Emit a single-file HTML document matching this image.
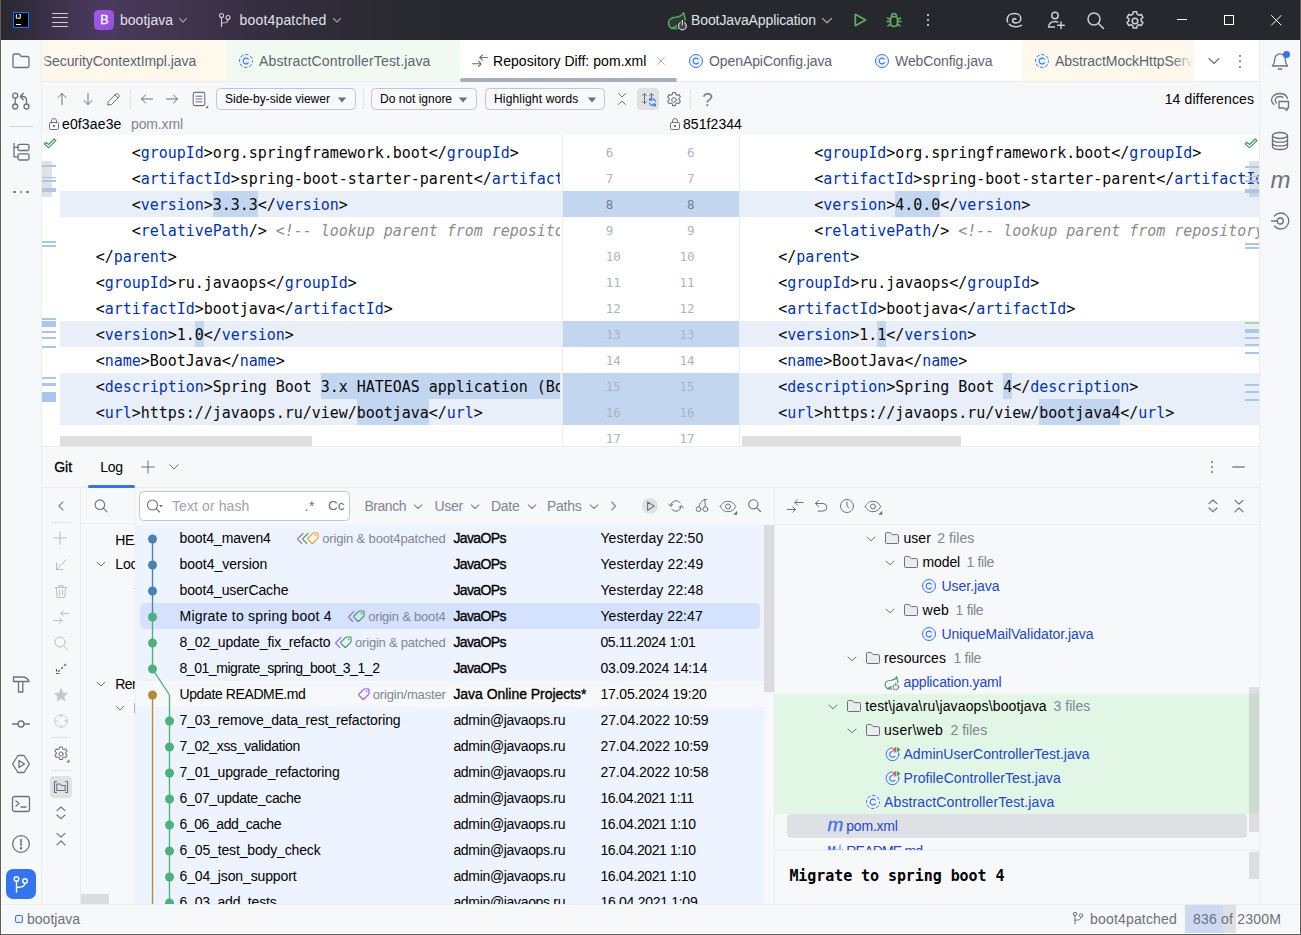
<!DOCTYPE html>
<html lang="en"><head><meta charset="utf-8"><title>bootjava – Repository Diff: pom.xml</title>
<style>

html,body{margin:0;padding:0}
body{width:1301px;height:935px;overflow:hidden;position:relative;background:#5e5e5c;font-family:"Liberation Sans",sans-serif}
div,span,svg{position:absolute}
.t{white-space:pre;line-height:20px;height:20px}
.m{font-family:"DejaVu Sans Mono","Liberation Mono",monospace}
svg{overflow:visible;fill:none;stroke:#6c707e;stroke-width:1;stroke-linecap:round;stroke-linejoin:round}
.clip{overflow:hidden}

</style></head>
<body>
<div style="left:1.1px;top:0px;width:1298.7px;height:933.9px;background:#fff;"></div>
<div style="left:2.1px;top:0px;width:1296.7px;height:932.7px;background:#f7f8fa;"></div>
<div style="left:1.1px;top:0px;width:1298.7px;height:40px;background:linear-gradient(90deg,#29272f 0,#372f45 40px,#4b3a5f 100px,#42354f 170px,#352e40 260px,#2c2a33 360px,#27282e 450px);"></div>
<div style="left:41px;top:40px;width:1px;height:864px;background:#ebecf0;"></div>
<div style="left:1259px;top:40px;width:1px;height:864px;background:#ebecf0;"></div>
<div style="left:42px;top:40px;width:1217px;height:41px;background:#fff;"></div>
<div style="left:42px;top:81px;width:1217px;height:1px;background:#ebecf0;"></div>
<div style="left:42px;top:135px;width:1217px;height:311px;background:#fff;"></div>
<div style="left:2.1px;top:904px;width:1296.7px;height:1px;background:#ebecf0;"></div>
<div style="left:13px;top:12px;width:16px;height:16px;background:#000;box-sizing:border-box;border:1px solid #087cfa;"></div>
<span class="t" style="top:7.300000000000001px;left:15.6px;font-size:6.5px;color:#fff;font-weight:700;letter-spacing:0.189px;">IJ</span>
<div style="left:16px;top:24px;width:5px;height:1px;background:#fff;"></div>
<div style="left:52px;top:12.7px;width:16px;height:1.3px;background:#ced0d6;border-radius:1px;"></div>
<div style="left:52px;top:17.1px;width:16px;height:1.3px;background:#ced0d6;border-radius:1px;"></div>
<div style="left:52px;top:21.5px;width:16px;height:1.3px;background:#ced0d6;border-radius:1px;"></div>
<div style="left:52px;top:25.900000000000002px;width:16px;height:1.3px;background:#ced0d6;border-radius:1px;"></div>
<div style="left:94px;top:10px;width:20px;height:20px;background:linear-gradient(135deg,#a159e4,#9450dc);border-radius:4.5px;"></div>
<span class="t" style="top:10.2px;left:100.3px;font-size:12.5px;color:#fff;-webkit-text-stroke:.3px #fff;">B</span>
<span class="t" style="top:10.100000000000001px;left:120px;font-size:14px;color:#dfe1e5;letter-spacing:0.008px;">bootjava</span>
<svg style="left:178px;top:15px;" width="10" height="10" viewBox="0 0 10 10"><path d="M1.5 3.5 5 7l3.5-3.500" stroke="#9a9ca5" stroke-width="1.1"/></svg>
<svg style="left:218px;top:12px;" width="14" height="16" viewBox="0 0 14 16"><g stroke="#ced0d6" stroke-width="1.1"><circle cx="3.5" cy="3.5" r="2"/><circle cx="10" cy="5.5" r="2"/><path d="M3.500 5.500V14.500M10 7.500c0 3-2 3.500-6.500 3.500"/></g></svg>
<span class="t" style="top:10.100000000000001px;left:239.5px;font-size:14px;color:#dfe1e5;letter-spacing:0.178px;">boot4patched</span>
<svg style="left:332px;top:15px;" width="10" height="10" viewBox="0 0 10 10"><path d="M1.500 3.500 5 7l3.500-3.500" stroke="#9a9ca5" stroke-width="1.1"/></svg>
<svg style="left:667px;top:9px;" width="22" height="22" viewBox="0 0 22 22"><path d="M16.600 3.600C15.500 6.500 13 7.800 9 8.200 4.500 8.500 1.500 10.500 1.500 14c0 2.500 1.500 4.300 3.300 5.500H12V16l6.500-5z" fill="#2b3d2e" stroke="none"/><g stroke="#57a55f" stroke-width="1.500" stroke-linejoin="round"><path d="M18.300 11C17.800 8 17.200 5.500 16.600 3.600 15.500 6.500 13 7.800 9 8.200 4.500 8.500 1.500 10.500 1.500 14c0 2.500 1.500 4.300 3.300 5.500h6"/><path d="M4.800 19.200c2.200-.6 3.700-1.400 5-2.700"/></g><circle cx="15.400" cy="16.900" r="5.300" fill="#27282e" stroke="none"/><circle cx="15.400" cy="16.900" r="3.900" fill="#43454a" stroke="#ced0d6" stroke-width="1.300"/><path d="M15.400 10.800v5.200" stroke="#27282e" stroke-width="3.400" stroke-linecap="butt"/><path d="M15.400 11.300v4.500" stroke="#ced0d6" stroke-width="1.300"/></svg>
<span class="t" style="top:10.100000000000001px;left:691px;font-size:14px;color:#dfe1e5;letter-spacing:-0.099px;">BootJavaApplication</span>
<svg style="left:821px;top:15px;" width="12" height="10" viewBox="0 0 12 10"><path d="M1.500 3.500 6 7.800l4.500-4.300" stroke="#a3a5ad" stroke-width="1.200"/></svg>
<svg style="left:853px;top:12px;" width="16" height="16" viewBox="0 0 16 16"><path d="M2.300 2.300v11.400l10.300-5.700z" stroke="#5fad65" stroke-width="1.700"/></svg>
<svg style="left:885px;top:11px;" width="18" height="18" viewBox="0 0 18 18"><g stroke="#5fad65" stroke-width="1.600"><path d="M5.500 8.500c0-2 1.500-3 3.500-3s3.500 1 3.500 3v3.500c0 2-1.500 3.500-3.500 3.500s-3.500-1.500-3.500-3.500z"/><path d="M6.500 5.500c0-1.700 1-3 2.500-3s2.500 1.300 2.500 3"/><path d="M5.500 8.500 2.500 7M12.500 8.500l3-1.500M5.500 10.500h-3.500M12.500 10.500h3.500M5.700 13l-2.700 1.800M12.300 13l2.700 1.800"/></g></svg>
<div style="left:926.7px;top:13.700000000000001px;width:2.2px;height:2.2px;background:#dfe1e5;border-radius:50%;"></div>
<div style="left:926.7px;top:19.0px;width:2.2px;height:2.2px;background:#dfe1e5;border-radius:50%;"></div>
<div style="left:926.7px;top:24.299999999999997px;width:2.2px;height:2.2px;background:#dfe1e5;border-radius:50%;"></div>
<svg style="left:1005px;top:9px;" width="20" height="20" viewBox="0 0 20 20"><g stroke="#ced0d6" stroke-width="1.550"><path d="M10.800 10.300c-.900-1.200-3.200-.700-3.200 1.100 0 1.700 1.600 2.500 3.300 2.500 2.700 0 4.900-1.800 4.900-4.400 0-3-2.800-5-6.300-5-4.200 0-7.300 2.500-7.300 6.200 0 .800.100 1.500.400 2.200"/><path d="M4.300 15.300c1.500 1.700 3.800 2.500 6.500 2.500 2.300 0 4.200-.500 5.700-1.400"/></g></svg>
<svg style="left:1046px;top:10px;" width="20" height="20" viewBox="0 0 20 20"><g stroke="#ced0d6" stroke-width="1.450"><circle cx="9" cy="5.500" r="3.200"/><path d="M2.500 17c.5-3.500 3-5.500 6.500-5.500 1 0 2 .2 2.800.6M2.500 17h6M15 12v6.500M11.700 15.200h6.600"/></g></svg>
<svg style="left:1086px;top:11px;" width="19" height="19" viewBox="0 0 19 19"><g stroke="#ced0d6" stroke-width="1.500"><circle cx="8" cy="8" r="6"/><path d="M12.500 12.500 17.500 17.500"/></g></svg>
<svg style="left:1125px;top:10px;" width="20" height="20" viewBox="0 0 20 20"><g stroke="#ced0d6" stroke-width="1.400" transform="translate(-.7 0) scale(1.070)"><path d="M8.400 1.700h3.200l.5 2.300 1.500.85 2.200-.75 1.600 2.800-1.700 1.550v1.700l1.700 1.550-1.600 2.800-2.200-.75-1.500.85-.5 2.300h-3.200l-.5-2.300-1.500-.85-2.200.75-1.600-2.800 1.700-1.550v-1.700l-1.700-1.550 1.600-2.800 2.200.75 1.500-.85z" stroke-linejoin="round"/><circle cx="10" cy="10.300" r="2.600"/></g></svg>
<div style="left:1177px;top:19px;width:10px;height:1px;background:#fff;"></div>
<div style="left:1224px;top:15px;width:10px;height:10px;box-sizing:border-box;border:1px solid #fff;"></div>
<svg style="left:1270.7px;top:14.5px;" width="11" height="11" viewBox="0 0 11 11"><path d="M.500.500l9.600 9.600M10.100.500l-9.600 9.600" stroke="#fff" stroke-width="1"/></svg>
<div style="left:42px;top:40px;width:184px;height:41px;background:#fef8ed;"></div>
<div class="clip" style="left:42px;top:40px;width:184px;height:40px">
<span class="t" style="top:11px;left:0.7px;font-size:14px;color:#60636f;letter-spacing:-0.056px;">SecurityContextImpl.java</span>
</div>
<div style="left:42px;top:40px;width:6px;height:40px;background:linear-gradient(90deg,#fef8ed,rgba(254,248,237,0));"></div>
<div style="left:226px;top:40px;width:234px;height:41px;background:#f0faf1;"></div>
<svg style="left:238px;top:53px;" width="16" height="16" viewBox="0 0 16 16"><circle cx="8" cy="8" r="6.500" stroke="#3574f0" fill="#edf3ff" stroke-dasharray="3.400 1.705" stroke-dashoffset="1.700" stroke-linecap="butt"/><path d="M10.300 9.800a2.900 2.900 0 1 1 0-3.600" stroke="#3574f0" stroke-width="1.1"/></svg>
<span class="t" style="top:51px;left:259px;font-size:14px;color:#60636f;letter-spacing:0.156px;">AbstractControllerTest.java</span>
<svg style="left:471px;top:52px;" width="18" height="18" viewBox="0 0 18 18"><g stroke="#6c707e" stroke-width="1.1"><path d="M16.500 5.500h-7.500M11.500 2.800 8.800 5.500l2.700 2.700"/><path d="M1.500 11.800h8.500M7.500 9.100l2.700 2.700-2.700 2.700"/></g></svg>
<span class="t" style="top:51px;left:493px;font-size:14px;color:#000;letter-spacing:0.053px;">Repository Diff: pom.xml</span>
<svg style="left:657px;top:57px;" width="8" height="8" viewBox="0 0 8 8"><path d="M.5.500l7 7M7.500.500l-7 7" stroke="#a8adbd" stroke-width="1"/></svg>
<div style="left:460px;top:78px;width:217px;height:3.6px;background:#a8adbd;border-radius:2px;"></div>
<svg style="left:688px;top:53px;" width="16" height="16" viewBox="0 0 16 16"><circle cx="8" cy="8" r="6.500" stroke="#3574f0" fill="#edf3ff" stroke-linecap="butt"/><path d="M10.300 9.800a2.900 2.900 0 1 1 0-3.600" stroke="#3574f0" stroke-width="1.1"/></svg>
<span class="t" style="top:51px;left:709px;font-size:14px;color:#60636f;letter-spacing:-0.085px;">OpenApiConfig.java</span>
<svg style="left:874px;top:53px;" width="16" height="16" viewBox="0 0 16 16"><circle cx="8" cy="8" r="6.500" stroke="#3574f0" fill="#edf3ff" stroke-linecap="butt"/><path d="M10.300 9.800a2.900 2.900 0 1 1 0-3.600" stroke="#3574f0" stroke-width="1.1"/></svg>
<span class="t" style="top:51px;left:895px;font-size:14px;color:#60636f;letter-spacing:-0.077px;">WebConfig.java</span>
<div style="left:1022px;top:40px;width:172px;height:41px;background:#fef8ed;"></div>
<svg style="left:1034px;top:53px;" width="16" height="16" viewBox="0 0 16 16"><circle cx="8" cy="8" r="6.500" stroke="#3574f0" fill="#edf3ff" stroke-dasharray="3.400 1.705" stroke-dashoffset="1.700" stroke-linecap="butt"/><path d="M10.300 9.800a2.900 2.900 0 1 1 0-3.600" stroke="#3574f0" stroke-width="1.1"/></svg>
<div class="clip" style="left:1055px;top:40px;width:139px;height:40px">
<span class="t" style="top:11px;left:0px;font-size:14px;color:#60636f;letter-spacing:-0.065px;">AbstractMockHttpServletRequest.java</span>
</div>
<div style="left:1172px;top:40px;width:22px;height:40px;background:linear-gradient(90deg,rgba(254,248,237,0),#fef8ed);"></div>
<svg style="left:1208px;top:56px;" width="12" height="10" viewBox="0 0 12 10"><path d="M1 2.500 6 7.500l5-5" stroke="#6c707e" stroke-width="1.1"/></svg>
<div style="left:1239px;top:54.5px;width:2px;height:2px;background:#6c707e;border-radius:50%;"></div>
<div style="left:1239px;top:60px;width:2px;height:2px;background:#6c707e;border-radius:50%;"></div>
<div style="left:1239px;top:65.5px;width:2px;height:2px;background:#6c707e;border-radius:50%;"></div>
<svg style="left:54px;top:91px;" width="16" height="16" viewBox="0 0 16 16"><path d="M8 13.700V2.500M3.900 6.600 8 2.500 12.100 6.600"/></svg>
<svg style="left:80px;top:91px;" width="16" height="16" viewBox="0 0 16 16"><path d="M8 2.300v11.200M3.900 9.400 8 13.500 12.100 9.400"/></svg>
<svg style="left:106px;top:91px;" width="16" height="16" viewBox="0 0 16 16"><path d="M2.500 10.500 9.800 3.200a1.700 1.700 0 0 1 2.400 0l.6.600a1.700 1.700 0 0 1 0 2.400L5.500 13.500l-3.500.500zM9 4l3 3"/></svg>
<div style="left:130px;top:89px;width:1px;height:20px;background:#dfe1e5;"></div>
<svg style="left:139px;top:91px;" width="16" height="16" viewBox="0 0 16 16"><path d="M13.700 8H2.500M6.600 3.900 2.500 8 6.600 12.100"/></svg>
<svg style="left:164px;top:91px;" width="16" height="16" viewBox="0 0 16 16"><path d="M2.300 8h11.200M9.400 3.900 13.500 8 9.400 12.100"/></svg>
<svg style="left:191px;top:91px;" width="18" height="18" viewBox="0 0 18 18"><rect x="2.200" y="1.400" width="11.600" height="13.200" rx="1.800" stroke-width="1.100"/><path d="M5 5.200h6M5 8h6M5 10.800h6"/><path d="M17.200 14.300v3h-3z" fill="#6c707e" stroke="none"/></svg>
<div style="left:216px;top:88px;width:139.5px;height:22px;box-sizing:border-box;border:1.200px solid #c0c3d0;border-radius:4.500px;"></div>
<span class="t" style="top:88.7px;left:225px;font-size:12px;color:#000;letter-spacing:0.015px;">Side-by-side viewer</span>
<svg style="left:337.2px;top:96.5px;" width="10" height="6" viewBox="0 0 10 6"><path d="M.800.500h8.400L5 5.500z" fill="#6e6e6e" stroke="none"/></svg>
<div style="left:363px;top:89px;width:1px;height:20px;background:#dfe1e5;"></div>
<div style="left:371px;top:88px;width:105.5px;height:22px;box-sizing:border-box;border:1.200px solid #c0c3d0;border-radius:4.500px;"></div>
<span class="t" style="top:88.7px;left:380px;font-size:12px;color:#000;">Do not ignore</span>
<svg style="left:458.2px;top:96.5px;" width="10" height="6" viewBox="0 0 10 6"><path d="M.800.500h8.400L5 5.500z" fill="#6e6e6e" stroke="none"/></svg>
<div style="left:485px;top:88px;width:120px;height:22px;box-sizing:border-box;border:1.200px solid #c0c3d0;border-radius:4.500px;"></div>
<span class="t" style="top:88.7px;left:494px;font-size:12px;color:#000;letter-spacing:0.164px;">Highlight words</span>
<svg style="left:586.7px;top:96.5px;" width="10" height="6" viewBox="0 0 10 6"><path d="M.800.500h8.400L5 5.500z" fill="#6e6e6e" stroke="none"/></svg>
<svg style="left:614px;top:91px;" width="16" height="16" viewBox="0 0 16 16"><path d="M4.500 2.500 8 6l3.500-3.500M4.500 13.500 8 10l3.500 3.500"/></svg>
<div style="left:637px;top:88px;width:22px;height:22px;background:#dfe1e5;border-radius:4px;"></div>
<svg style="left:640.7px;top:91px;" width="16" height="16" viewBox="0 0 16 16"><path d="M3.500 2.500v10M1.500 4.500l2-2 2 2M1.500 10.500l2 2 2-2M10.500 2.500v4.500M8.500 4.500l2-2 2 2"/><g stroke="#3574f0" stroke-width="1.2"><path d="M14.300 10.300a3 3 0 0 0-5.300-1.300M8.700 12a3 3 0 0 0 5.300 1.300"/><path d="M8.800 7.200v2h2M14.200 15.200v-2h-2"/></g></svg>
<svg style="left:665px;top:90.9px;" width="18" height="18" viewBox="0 0 18 18"><path d="M8.400 1.700h3.200l.5 2.300 1.500.85 2.200-.75 1.600 2.800-1.700 1.550v1.700l1.700 1.550-1.600 2.800-2.200-.75-1.500.85-.5 2.300h-3.200l-.5-2.300-1.500-.85-2.200.75-1.600-2.800 1.700-1.550v-1.700l-1.700-1.550 1.600-2.800 2.200.75 1.500-.85z" transform="translate(.4 .100) scale(.86)" stroke-width="1.250"/><circle cx="9" cy="9" r="2.300"/></svg>
<div style="left:690px;top:89px;width:1px;height:20px;background:#dfe1e5;"></div>
<span class="t" style="top:90.1px;left:702.3px;font-size:19px;color:#7a7e8c;">?</span>
<span class="t" style="top:89px;left:1164.63px;font-size:14px;color:#000;letter-spacing:0.128px;">14 differences</span>
<svg style="left:49px;top:118px;" width="10" height="12" viewBox="0 0 10 12"><rect x=".500" y="4.500" width="9" height="7" rx="1.200"/><path d="M2.500 4.500v-1.500a2.500 2.500 0 0 1 5 0v1.500"/><rect x="4" y="7" width="2" height="2" fill="#6c707e" stroke="none"/></svg>
<span class="t" style="top:114px;left:62px;font-size:14px;color:#000;letter-spacing:0.137px;">e0f3ae3e</span>
<span class="t" style="top:114px;left:131px;font-size:14px;color:#818594;letter-spacing:-0.129px;">pom.xml</span>
<svg style="left:670px;top:118px;" width="10" height="12" viewBox="0 0 10 12"><rect x=".500" y="4.500" width="9" height="7" rx="1.200"/><path d="M2.500 4.500v-1.500a2.500 2.500 0 0 1 5 0v1.500"/><rect x="4" y="7" width="2" height="2" fill="#6c707e" stroke="none"/></svg>
<span class="t" style="top:114px;left:683px;font-size:14px;color:#000;letter-spacing:0.074px;">851f2344</span>
<div class="clip" style="left:60px;top:135px;width:502px;height:302px">
<div style="left:0px;top:56px;width:502px;height:26px;background:#e9eff9;"></div>
<div style="left:0px;top:186px;width:502px;height:26px;background:#e9eff9;"></div>
<div style="left:0px;top:238px;width:502px;height:26px;background:#e9eff9;"></div>
<div style="left:0px;top:264px;width:502px;height:26px;background:#e9eff9;"></div>
<span class="t m" style="top:7.5px;left:71.8px;font-size:15px;color:#080808;">&lt;</span>
<span class="t m" style="top:7.5px;left:80.8px;font-size:15px;color:#0033b3;letter-spacing:-0.031px;">groupId</span>
<span class="t m" style="top:7.5px;left:143.8px;font-size:15px;color:#080808;letter-spacing:-0.031px;">&gt;org.springframework.boot&lt;/</span>
<span class="t m" style="top:7.5px;left:386.8px;font-size:15px;color:#0033b3;letter-spacing:-0.031px;">groupId</span>
<span class="t m" style="top:7.5px;left:449.8px;font-size:15px;color:#080808;">&gt;</span>
<span class="t m" style="top:33.5px;left:71.8px;font-size:15px;color:#080808;">&lt;</span>
<span class="t m" style="top:33.5px;left:80.8px;font-size:15px;color:#0033b3;letter-spacing:-0.031px;">artifactId</span>
<span class="t m" style="top:33.5px;left:170.8px;font-size:15px;color:#080808;letter-spacing:-0.031px;">&gt;spring-boot-starter-parent&lt;/</span>
<span class="t m" style="top:33.5px;left:431.8px;font-size:15px;color:#0033b3;letter-spacing:-0.031px;">artifactId</span>
<span class="t m" style="top:33.5px;left:521.8px;font-size:15px;color:#080808;">&gt;</span>
<span class="t m" style="top:59.5px;left:71.8px;font-size:15px;color:#080808;">&lt;</span>
<span class="t m" style="top:59.5px;left:80.8px;font-size:15px;color:#0033b3;letter-spacing:-0.031px;">version</span>
<span class="t m" style="top:59.5px;left:143.8px;font-size:15px;color:#080808;">&gt;</span>
<div style="left:152.8px;top:56px;width:45.0px;height:26px;background:#c2d6f0;"></div>
<span class="t m" style="top:59.5px;left:152.8px;font-size:15px;color:#080808;letter-spacing:-0.031px;">3.3.3</span>
<span class="t m" style="top:59.5px;left:197.8px;font-size:15px;color:#080808;letter-spacing:-0.031px;">&lt;/</span>
<span class="t m" style="top:59.5px;left:215.8px;font-size:15px;color:#0033b3;letter-spacing:-0.031px;">version</span>
<span class="t m" style="top:59.5px;left:278.8px;font-size:15px;color:#080808;">&gt;</span>
<span class="t m" style="top:85.5px;left:71.8px;font-size:15px;color:#080808;">&lt;</span>
<span class="t m" style="top:85.5px;left:80.8px;font-size:15px;color:#0033b3;letter-spacing:-0.031px;">relativePath</span>
<span class="t m" style="top:85.5px;left:188.8px;font-size:15px;color:#080808;letter-spacing:-0.031px;">/&gt; </span>
<span class="t m" style="top:85.5px;left:215.8px;font-size:15px;color:#8c8c8c;font-style:italic;letter-spacing:-0.031px;">&lt;!-- lookup parent from repository --&gt;</span>
<span class="t m" style="top:111.5px;left:35.8px;font-size:15px;color:#080808;letter-spacing:-0.031px;">&lt;/</span>
<span class="t m" style="top:111.5px;left:53.8px;font-size:15px;color:#0033b3;letter-spacing:-0.031px;">parent</span>
<span class="t m" style="top:111.5px;left:107.8px;font-size:15px;color:#080808;">&gt;</span>
<span class="t m" style="top:137.5px;left:35.8px;font-size:15px;color:#080808;">&lt;</span>
<span class="t m" style="top:137.5px;left:44.8px;font-size:15px;color:#0033b3;letter-spacing:-0.031px;">groupId</span>
<span class="t m" style="top:137.5px;left:107.8px;font-size:15px;color:#080808;letter-spacing:-0.031px;">&gt;ru.javaops&lt;/</span>
<span class="t m" style="top:137.5px;left:224.8px;font-size:15px;color:#0033b3;letter-spacing:-0.031px;">groupId</span>
<span class="t m" style="top:137.5px;left:287.8px;font-size:15px;color:#080808;">&gt;</span>
<span class="t m" style="top:163.5px;left:35.8px;font-size:15px;color:#080808;">&lt;</span>
<span class="t m" style="top:163.5px;left:44.8px;font-size:15px;color:#0033b3;letter-spacing:-0.031px;">artifactId</span>
<span class="t m" style="top:163.5px;left:134.8px;font-size:15px;color:#080808;letter-spacing:-0.031px;">&gt;bootjava&lt;/</span>
<span class="t m" style="top:163.5px;left:233.8px;font-size:15px;color:#0033b3;letter-spacing:-0.031px;">artifactId</span>
<span class="t m" style="top:163.5px;left:323.8px;font-size:15px;color:#080808;">&gt;</span>
<span class="t m" style="top:189.5px;left:35.8px;font-size:15px;color:#080808;">&lt;</span>
<span class="t m" style="top:189.5px;left:44.8px;font-size:15px;color:#0033b3;letter-spacing:-0.031px;">version</span>
<span class="t m" style="top:189.5px;left:107.8px;font-size:15px;color:#080808;letter-spacing:-0.031px;">&gt;1.</span>
<div style="left:134.8px;top:186px;width:9.0px;height:26px;background:#c2d6f0;"></div>
<span class="t m" style="top:189.5px;left:134.8px;font-size:15px;color:#080808;">0</span>
<span class="t m" style="top:189.5px;left:143.8px;font-size:15px;color:#080808;letter-spacing:-0.031px;">&lt;/</span>
<span class="t m" style="top:189.5px;left:161.8px;font-size:15px;color:#0033b3;letter-spacing:-0.031px;">version</span>
<span class="t m" style="top:189.5px;left:224.8px;font-size:15px;color:#080808;">&gt;</span>
<span class="t m" style="top:215.5px;left:35.8px;font-size:15px;color:#080808;">&lt;</span>
<span class="t m" style="top:215.5px;left:44.8px;font-size:15px;color:#0033b3;letter-spacing:-0.031px;">name</span>
<span class="t m" style="top:215.5px;left:80.8px;font-size:15px;color:#080808;letter-spacing:-0.031px;">&gt;BootJava&lt;/</span>
<span class="t m" style="top:215.5px;left:179.8px;font-size:15px;color:#0033b3;letter-spacing:-0.031px;">name</span>
<span class="t m" style="top:215.5px;left:215.8px;font-size:15px;color:#080808;">&gt;</span>
<span class="t m" style="top:241.5px;left:35.8px;font-size:15px;color:#080808;">&lt;</span>
<span class="t m" style="top:241.5px;left:44.8px;font-size:15px;color:#0033b3;letter-spacing:-0.031px;">description</span>
<span class="t m" style="top:241.5px;left:143.8px;font-size:15px;color:#080808;letter-spacing:-0.031px;">&gt;Spring Boot </span>
<div style="left:260.8px;top:238px;width:324.0px;height:26px;background:#c2d6f0;"></div>
<span class="t m" style="top:241.5px;left:260.8px;font-size:15px;color:#080808;letter-spacing:-0.031px;">3.x HATEOAS application (BootJava)&lt;/</span>
<div style="left:584.8px;top:238px;width:45.0px;height:26px;background:#c2d6f0;"></div>
<span class="t m" style="top:241.5px;left:584.8px;font-size:15px;color:#0033b3;letter-spacing:-0.031px;">descr</span>
<span class="t m" style="top:241.5px;left:629.8px;font-size:15px;color:#0033b3;letter-spacing:-0.031px;">iption</span>
<span class="t m" style="top:241.5px;left:683.8px;font-size:15px;color:#080808;">&gt;</span>
<span class="t m" style="top:267.5px;left:35.8px;font-size:15px;color:#080808;">&lt;</span>
<span class="t m" style="top:267.5px;left:44.8px;font-size:15px;color:#0033b3;letter-spacing:-0.031px;">url</span>
<span class="t m" style="top:267.5px;left:71.8px;font-size:15px;color:#080808;letter-spacing:-0.031px;">&gt;https:</span>
<span class="t m" style="top:267.5px;left:134.8px;font-size:15px;color:#080808;letter-spacing:-0.031px;">//javaops.ru/view/</span>
<div style="left:296.8px;top:264px;width:72.0px;height:26px;background:#c2d6f0;"></div>
<span class="t m" style="top:267.5px;left:296.8px;font-size:15px;color:#080808;letter-spacing:-0.031px;">bootjava</span>
<span class="t m" style="top:267.5px;left:368.8px;font-size:15px;color:#080808;letter-spacing:-0.031px;">&lt;/</span>
<span class="t m" style="top:267.5px;left:386.8px;font-size:15px;color:#0033b3;letter-spacing:-0.031px;">url</span>
<span class="t m" style="top:267.5px;left:413.8px;font-size:15px;color:#080808;">&gt;</span>
</div>
<div style="left:560px;top:135px;width:2px;height:302px;background:#fff;"></div>
<div style="left:560px;top:191px;width:2px;height:26px;background:#e9eff9;"></div>
<div style="left:560px;top:321px;width:2px;height:26px;background:#e9eff9;"></div>
<div style="left:560px;top:373px;width:2px;height:26px;background:#e9eff9;"></div>
<div style="left:560px;top:399px;width:2px;height:26px;background:#e9eff9;"></div>
<div class="clip" style="left:740px;top:135px;width:519px;height:302px">
<div style="left:0px;top:56px;width:519px;height:26px;background:#e9eff9;"></div>
<div style="left:0px;top:186px;width:519px;height:26px;background:#e9eff9;"></div>
<div style="left:0px;top:238px;width:519px;height:26px;background:#e9eff9;"></div>
<div style="left:0px;top:264px;width:519px;height:26px;background:#e9eff9;"></div>
<span class="t m" style="top:7.5px;left:74.2px;font-size:15px;color:#080808;">&lt;</span>
<span class="t m" style="top:7.5px;left:83.2px;font-size:15px;color:#0033b3;letter-spacing:-0.031px;">groupId</span>
<span class="t m" style="top:7.5px;left:146.2px;font-size:15px;color:#080808;letter-spacing:-0.031px;">&gt;org.springframework.boot&lt;/</span>
<span class="t m" style="top:7.5px;left:389.2px;font-size:15px;color:#0033b3;letter-spacing:-0.031px;">groupId</span>
<span class="t m" style="top:7.5px;left:452.2px;font-size:15px;color:#080808;">&gt;</span>
<span class="t m" style="top:33.5px;left:74.2px;font-size:15px;color:#080808;">&lt;</span>
<span class="t m" style="top:33.5px;left:83.2px;font-size:15px;color:#0033b3;letter-spacing:-0.031px;">artifactId</span>
<span class="t m" style="top:33.5px;left:173.2px;font-size:15px;color:#080808;letter-spacing:-0.031px;">&gt;spring-boot-starter-parent&lt;/</span>
<span class="t m" style="top:33.5px;left:434.2px;font-size:15px;color:#0033b3;letter-spacing:-0.031px;">artifactId</span>
<span class="t m" style="top:33.5px;left:524.2px;font-size:15px;color:#080808;">&gt;</span>
<span class="t m" style="top:59.5px;left:74.2px;font-size:15px;color:#080808;">&lt;</span>
<span class="t m" style="top:59.5px;left:83.2px;font-size:15px;color:#0033b3;letter-spacing:-0.031px;">version</span>
<span class="t m" style="top:59.5px;left:146.2px;font-size:15px;color:#080808;">&gt;</span>
<div style="left:155.2px;top:56px;width:45.0px;height:26px;background:#c2d6f0;"></div>
<span class="t m" style="top:59.5px;left:155.2px;font-size:15px;color:#080808;letter-spacing:-0.031px;">4.0.0</span>
<span class="t m" style="top:59.5px;left:200.2px;font-size:15px;color:#080808;letter-spacing:-0.031px;">&lt;/</span>
<span class="t m" style="top:59.5px;left:218.2px;font-size:15px;color:#0033b3;letter-spacing:-0.031px;">version</span>
<span class="t m" style="top:59.5px;left:281.2px;font-size:15px;color:#080808;">&gt;</span>
<span class="t m" style="top:85.5px;left:74.2px;font-size:15px;color:#080808;">&lt;</span>
<span class="t m" style="top:85.5px;left:83.2px;font-size:15px;color:#0033b3;letter-spacing:-0.031px;">relativePath</span>
<span class="t m" style="top:85.5px;left:191.2px;font-size:15px;color:#080808;letter-spacing:-0.031px;">/&gt; </span>
<span class="t m" style="top:85.5px;left:218.2px;font-size:15px;color:#8c8c8c;font-style:italic;letter-spacing:-0.031px;">&lt;!-- lookup parent from repository --&gt;</span>
<span class="t m" style="top:111.5px;left:38.2px;font-size:15px;color:#080808;letter-spacing:-0.031px;">&lt;/</span>
<span class="t m" style="top:111.5px;left:56.2px;font-size:15px;color:#0033b3;letter-spacing:-0.031px;">parent</span>
<span class="t m" style="top:111.5px;left:110.2px;font-size:15px;color:#080808;">&gt;</span>
<span class="t m" style="top:137.5px;left:38.2px;font-size:15px;color:#080808;">&lt;</span>
<span class="t m" style="top:137.5px;left:47.2px;font-size:15px;color:#0033b3;letter-spacing:-0.031px;">groupId</span>
<span class="t m" style="top:137.5px;left:110.2px;font-size:15px;color:#080808;letter-spacing:-0.031px;">&gt;ru.javaops&lt;/</span>
<span class="t m" style="top:137.5px;left:227.2px;font-size:15px;color:#0033b3;letter-spacing:-0.031px;">groupId</span>
<span class="t m" style="top:137.5px;left:290.2px;font-size:15px;color:#080808;">&gt;</span>
<span class="t m" style="top:163.5px;left:38.2px;font-size:15px;color:#080808;">&lt;</span>
<span class="t m" style="top:163.5px;left:47.2px;font-size:15px;color:#0033b3;letter-spacing:-0.031px;">artifactId</span>
<span class="t m" style="top:163.5px;left:137.2px;font-size:15px;color:#080808;letter-spacing:-0.031px;">&gt;bootjava&lt;/</span>
<span class="t m" style="top:163.5px;left:236.2px;font-size:15px;color:#0033b3;letter-spacing:-0.031px;">artifactId</span>
<span class="t m" style="top:163.5px;left:326.2px;font-size:15px;color:#080808;">&gt;</span>
<span class="t m" style="top:189.5px;left:38.2px;font-size:15px;color:#080808;">&lt;</span>
<span class="t m" style="top:189.5px;left:47.2px;font-size:15px;color:#0033b3;letter-spacing:-0.031px;">version</span>
<span class="t m" style="top:189.5px;left:110.2px;font-size:15px;color:#080808;letter-spacing:-0.031px;">&gt;1.</span>
<div style="left:137.2px;top:186px;width:9.0px;height:26px;background:#c2d6f0;"></div>
<span class="t m" style="top:189.5px;left:137.2px;font-size:15px;color:#080808;">1</span>
<span class="t m" style="top:189.5px;left:146.2px;font-size:15px;color:#080808;letter-spacing:-0.031px;">&lt;/</span>
<span class="t m" style="top:189.5px;left:164.2px;font-size:15px;color:#0033b3;letter-spacing:-0.031px;">version</span>
<span class="t m" style="top:189.5px;left:227.2px;font-size:15px;color:#080808;">&gt;</span>
<span class="t m" style="top:215.5px;left:38.2px;font-size:15px;color:#080808;">&lt;</span>
<span class="t m" style="top:215.5px;left:47.2px;font-size:15px;color:#0033b3;letter-spacing:-0.031px;">name</span>
<span class="t m" style="top:215.5px;left:83.2px;font-size:15px;color:#080808;letter-spacing:-0.031px;">&gt;BootJava&lt;/</span>
<span class="t m" style="top:215.5px;left:182.2px;font-size:15px;color:#0033b3;letter-spacing:-0.031px;">name</span>
<span class="t m" style="top:215.5px;left:218.2px;font-size:15px;color:#080808;">&gt;</span>
<span class="t m" style="top:241.5px;left:38.2px;font-size:15px;color:#080808;">&lt;</span>
<span class="t m" style="top:241.5px;left:47.2px;font-size:15px;color:#0033b3;letter-spacing:-0.031px;">description</span>
<span class="t m" style="top:241.5px;left:146.2px;font-size:15px;color:#080808;letter-spacing:-0.031px;">&gt;Spring Boot </span>
<div style="left:263.2px;top:238px;width:9.0px;height:26px;background:#c2d6f0;"></div>
<span class="t m" style="top:241.5px;left:263.2px;font-size:15px;color:#080808;">4</span>
<span class="t m" style="top:241.5px;left:272.2px;font-size:15px;color:#080808;letter-spacing:-0.031px;">&lt;/</span>
<span class="t m" style="top:241.5px;left:290.2px;font-size:15px;color:#0033b3;letter-spacing:-0.031px;">description</span>
<span class="t m" style="top:241.5px;left:389.2px;font-size:15px;color:#080808;">&gt;</span>
<span class="t m" style="top:267.5px;left:38.2px;font-size:15px;color:#080808;">&lt;</span>
<span class="t m" style="top:267.5px;left:47.2px;font-size:15px;color:#0033b3;letter-spacing:-0.031px;">url</span>
<span class="t m" style="top:267.5px;left:74.2px;font-size:15px;color:#080808;letter-spacing:-0.031px;">&gt;https:</span>
<span class="t m" style="top:267.5px;left:137.2px;font-size:15px;color:#080808;letter-spacing:-0.031px;">//javaops.ru/view/</span>
<div style="left:299.2px;top:264px;width:81.0px;height:26px;background:#c2d6f0;"></div>
<span class="t m" style="top:267.5px;left:299.2px;font-size:15px;color:#080808;letter-spacing:-0.031px;">bootjava4</span>
<span class="t m" style="top:267.5px;left:380.2px;font-size:15px;color:#080808;letter-spacing:-0.031px;">&lt;/</span>
<span class="t m" style="top:267.5px;left:398.2px;font-size:15px;color:#0033b3;letter-spacing:-0.031px;">url</span>
<span class="t m" style="top:267.5px;left:425.2px;font-size:15px;color:#080808;">&gt;</span>
</div>
<div style="left:562px;top:135px;width:1px;height:311px;background:#ebecf0;"></div>
<div style="left:739px;top:135px;width:1px;height:311px;background:#ebecf0;"></div>
<div style="left:563px;top:191px;width:176px;height:26px;background:#c2d6f0;"></div>
<div style="left:563px;top:321px;width:176px;height:26px;background:#c2d6f0;"></div>
<div style="left:563px;top:373px;width:176px;height:26px;background:#c2d6f0;"></div>
<div style="left:563px;top:399px;width:176px;height:26px;background:#c2d6f0;"></div>
<div class="clip" style="left:563px;top:135px;width:176px;height:311px">
<span class="t m" style="top:8px;left:42.7px;font-size:12.5px;color:#aeb3c2;">6</span>
<span class="t m" style="top:8px;left:123.97px;font-size:12.5px;color:#aeb3c2;">6</span>
<span class="t m" style="top:34px;left:42.7px;font-size:12.5px;color:#aeb3c2;">7</span>
<span class="t m" style="top:34px;left:123.97px;font-size:12.5px;color:#aeb3c2;">7</span>
<span class="t m" style="top:60px;left:42.7px;font-size:12.5px;color:#767a8a;">8</span>
<span class="t m" style="top:60px;left:123.97px;font-size:12.5px;color:#767a8a;">8</span>
<span class="t m" style="top:86px;left:42.7px;font-size:12.5px;color:#aeb3c2;">9</span>
<span class="t m" style="top:86px;left:123.97px;font-size:12.5px;color:#aeb3c2;">9</span>
<span class="t m" style="top:112px;left:42.7px;font-size:12.5px;color:#aeb3c2;letter-spacing:-0.031px;">10</span>
<span class="t m" style="top:112px;left:116.47px;font-size:12.5px;color:#aeb3c2;letter-spacing:-0.031px;">10</span>
<span class="t m" style="top:138px;left:42.7px;font-size:12.5px;color:#aeb3c2;letter-spacing:-0.031px;">11</span>
<span class="t m" style="top:138px;left:116.47px;font-size:12.5px;color:#aeb3c2;letter-spacing:-0.031px;">11</span>
<span class="t m" style="top:164px;left:42.7px;font-size:12.5px;color:#aeb3c2;letter-spacing:-0.031px;">12</span>
<span class="t m" style="top:164px;left:116.47px;font-size:12.5px;color:#aeb3c2;letter-spacing:-0.031px;">12</span>
<span class="t m" style="top:190px;left:42.7px;font-size:12.5px;color:#aeb3c2;letter-spacing:-0.031px;">13</span>
<span class="t m" style="top:190px;left:116.47px;font-size:12.5px;color:#aeb3c2;letter-spacing:-0.031px;">13</span>
<span class="t m" style="top:216px;left:42.7px;font-size:12.5px;color:#aeb3c2;letter-spacing:-0.031px;">14</span>
<span class="t m" style="top:216px;left:116.47px;font-size:12.5px;color:#aeb3c2;letter-spacing:-0.031px;">14</span>
<span class="t m" style="top:242px;left:42.7px;font-size:12.5px;color:#aeb3c2;letter-spacing:-0.031px;">15</span>
<span class="t m" style="top:242px;left:116.47px;font-size:12.5px;color:#aeb3c2;letter-spacing:-0.031px;">15</span>
<span class="t m" style="top:268px;left:42.7px;font-size:12.5px;color:#aeb3c2;letter-spacing:-0.031px;">16</span>
<span class="t m" style="top:268px;left:116.47px;font-size:12.5px;color:#aeb3c2;letter-spacing:-0.031px;">16</span>
<span class="t m" style="top:294px;left:42.7px;font-size:12.5px;color:#aeb3c2;letter-spacing:-0.031px;">17</span>
<span class="t m" style="top:294px;left:116.47px;font-size:12.5px;color:#aeb3c2;letter-spacing:-0.031px;">17</span>
</div>
<div style="left:60px;top:436px;width:252px;height:10px;background:#dfdfdf;"></div>
<div style="left:742px;top:436px;width:219px;height:10px;background:#dfdfdf;"></div>
<div style="left:42px;top:161px;width:10px;height:36px;background:rgba(120,120,125,.22);"></div>
<div style="left:42px;top:165px;width:14px;height:2px;background:#a9c7ee;"></div>
<div style="left:42px;top:176.5px;width:14px;height:1.5px;background:#a9c7ee;"></div>
<div style="left:42px;top:180px;width:14px;height:1.5px;background:#a9c7ee;"></div>
<div style="left:42px;top:187.7px;width:14px;height:4px;background:#a9c7ee;"></div>
<div style="left:42px;top:241px;width:14px;height:1.5px;background:#a9c7ee;"></div>
<div style="left:42px;top:245px;width:14px;height:1.5px;background:#a9c7ee;"></div>
<div style="left:42px;top:318px;width:14px;height:2px;background:#a3d9a5;"></div>
<div style="left:42px;top:321.2px;width:14px;height:5.8px;background:#a9c7ee;"></div>
<div style="left:42px;top:331.3px;width:14px;height:1.7px;background:#a9c7ee;"></div>
<div style="left:42px;top:337.3px;width:14px;height:1.7px;background:#a9c7ee;"></div>
<div style="left:42px;top:346.2px;width:14px;height:1.7px;background:#a9c7ee;"></div>
<div style="left:42px;top:377px;width:14px;height:1.7px;background:#a9c7ee;"></div>
<div style="left:42px;top:383px;width:14px;height:2.8px;background:#a9c7ee;"></div>
<div style="left:42px;top:392.3px;width:14px;height:9.7px;background:#a9c7ee;"></div>
<div style="left:1249px;top:161px;width:10px;height:36px;background:rgba(120,120,125,.22);"></div>
<div style="left:1244.5px;top:166.2px;width:14.5px;height:2px;background:#a9c7ee;"></div>
<div style="left:1244.5px;top:175.8px;width:14.5px;height:1px;background:#a9c7ee;"></div>
<div style="left:1244.5px;top:180px;width:14.5px;height:1.5px;background:#a9c7ee;"></div>
<div style="left:1244.5px;top:188.8px;width:14.5px;height:4px;background:#a9c7ee;"></div>
<div style="left:1244.5px;top:243px;width:14.5px;height:1.5px;background:#a9c7ee;"></div>
<div style="left:1244.5px;top:247px;width:14.5px;height:1.5px;background:#a9c7ee;"></div>
<div style="left:1244.8px;top:322px;width:14.2px;height:2px;background:#a3d9a5;"></div>
<div style="left:1244.8px;top:328.9px;width:14.2px;height:4px;background:#a9c7ee;"></div>
<div style="left:1244.8px;top:337px;width:14.2px;height:2px;background:#a9c7ee;"></div>
<div style="left:1244.8px;top:344px;width:14.2px;height:2px;background:#a9c7ee;"></div>
<div style="left:1244.8px;top:352px;width:14.2px;height:2px;background:#a9c7ee;"></div>
<div style="left:1244.8px;top:383.9px;width:14.2px;height:2px;background:#a9c7ee;"></div>
<div style="left:1244.8px;top:391px;width:14.2px;height:2px;background:#a9c7ee;"></div>
<div style="left:1244.8px;top:399px;width:14.2px;height:2px;background:#a9c7ee;"></div>
<svg style="left:43px;top:137px;" width="14" height="12" viewBox="0 0 14 12"><path d="M2.800 5.300 1.200 6.800 5.500 10.700 13 3.600 11.200 2 5.500 7.500z" stroke="#329a52" stroke-width="1.100" fill="#fff"/></svg>
<svg style="left:1244px;top:137px;" width="14" height="12" viewBox="0 0 14 12"><path d="M2.800 5.300 1.200 6.800 5.500 10.700 13 3.600 11.200 2 5.500 7.500z" stroke="#329a52" stroke-width="1.100" fill="#fff"/></svg>
<div style="left:42px;top:446px;width:1217px;height:1px;background:#ebecf0;"></div>
<span class="t" style="top:457px;left:54.2px;font-size:14px;color:#000;letter-spacing:0.036px;-webkit-text-stroke:.28px #000;">Git</span>
<span class="t" style="top:457px;left:100.2px;font-size:14px;color:#000;letter-spacing:-0.253px;">Log</span>
<svg style="left:140.5px;top:459.5px;" width="14" height="14" viewBox="0 0 14 14"><path d="M7 .800v12.400M.800 7h12.400"/></svg>
<svg style="left:169px;top:463px;" width="10" height="8" viewBox="0 0 10 8"><path d="M.800 1.800 5 6l4.200-4.200"/></svg>
<div style="left:1211px;top:461px;width:2px;height:2px;background:#6c707e;border-radius:50%;"></div>
<div style="left:1211px;top:466px;width:2px;height:2px;background:#6c707e;border-radius:50%;"></div>
<div style="left:1211px;top:471px;width:2px;height:2px;background:#6c707e;border-radius:50%;"></div>
<div style="left:1231.6px;top:466px;width:13px;height:1.7px;background:#a0a2ae;border-radius:1px;"></div>
<div style="left:42px;top:487px;width:1217px;height:1px;background:#ebecf0;"></div>
<div style="left:88px;top:485px;width:47px;height:3px;background:#3574f0;border-radius:1.500px;"></div>
<div style="left:80px;top:488px;width:1px;height:416px;background:#ebecf0;"></div>
<svg style="left:56px;top:500px;" width="10" height="12" viewBox="0 0 10 12"><path d="M7 2 2.800 6 7 10" stroke="#818594" stroke-width="1.100"/></svg>
<div style="left:51px;top:522px;width:20px;height:1px;background:#dfe1e5;"></div>
<svg style="left:52.4px;top:530.3px;" width="16" height="16" viewBox="0 0 16 16"><path d="M8 1.700v12.600M1.700 8h12.600" stroke="#b9bcc6"/></svg>
<svg style="left:53px;top:557px;" width="16" height="16" viewBox="0 0 16 16"><path d="M13 3 3.500 12.500M3.500 6v6.500H10" stroke="#b9bcc6"/></svg>
<svg style="left:53px;top:583px;" width="16" height="16" viewBox="0 0 16 16"><g stroke="#b9bcc6"><path d="M2 4.500h12M6 4.500v-2h4v2M3.500 4.500l.500 9a1 1 0 0 0 1 1h6a1 1 0 0 0 1-1l.500-9M6.500 7v5M9.500 7v5"/></g></svg>
<svg style="left:52px;top:608px;" width="18" height="18" viewBox="0 0 18 18"><g stroke="#b9bcc6"><path d="M16.500 5.500h-7.500M11.500 2.800 8.800 5.500l2.700 2.700"/><path d="M1.500 12.500h8.500M7.500 9.800l2.700 2.700-2.700 2.700"/></g></svg>
<svg style="left:53px;top:635px;" width="16" height="16" viewBox="0 0 16 16"><g stroke="#b9bcc6"><circle cx="7" cy="7" r="5"/><path d="M10.700 10.700 14.500 14.500"/></g></svg>
<svg style="left:53px;top:661px;" width="16" height="16" viewBox="0 0 16 16"><g stroke="#4d5060" stroke-width="1.100" stroke-linecap="butt"><path d="M13 3 4 12" stroke-dasharray="2.600 1.700"/><path d="M3.500 8v4.500H8" stroke-dasharray="2.600 1.700"/></g></svg>
<svg style="left:53px;top:687px;" width="16" height="16" viewBox="0 0 16 16"><path d="M8 1.300l2 4.400 4.800.500-3.600 3.200 1 4.700L8 11.700l-4.200 2.400 1-4.700L1.200 6.200l4.800-.500z" fill="#c6c8d0" stroke="#c6c8d0" stroke-width=".4"/></svg>
<svg style="left:53px;top:713px;" width="16" height="16" viewBox="0 0 16 16"><g stroke="#c9ccd6"><circle cx="8" cy="8" r="6.300"/><path d="M8 1.700v3M8 11.300v3M1.700 8h3M11.300 8h3"/></g></svg>
<div style="left:51px;top:737px;width:20px;height:1px;background:#dfe1e5;"></div>
<div style="left:51px;top:770px;width:20px;height:1px;background:#dfe1e5;"></div>
<svg style="left:52px;top:745px;" width="18" height="18" viewBox="0 0 18 18"><path d="M8.400 1.700h3.200l.5 2.300 1.500.85 2.200-.75 1.600 2.800-1.700 1.550v1.700l1.700 1.550-1.600 2.800-2.200-.75-1.500.85-.5 2.300h-3.200l-.5-2.300-1.500-.85-2.200.75-1.600-2.800 1.700-1.550v-1.700l-1.700-1.550 1.600-2.800 2.200.75 1.500-.85z" transform="translate(.8 .6) scale(.82)" stroke-width="1.250"/><circle cx="9" cy="9" r="2.100"/><path d="M17.500 14.200v3.300h-3.300z" fill="#6c707e" stroke="none"/></svg>
<div style="left:50px;top:776px;width:22px;height:22px;background:#dfe1e5;border-radius:4px;"></div>
<svg style="left:53px;top:779px;" width="16" height="16" viewBox="0 0 16 16"><g stroke-width="1.100"><path d="M3.500 2.500h-2v11h2M12.500 2.500h2v11h-2"/><path d="M3.800 5v6.500h8.400V6.500H8.500L7.200 5z"/></g></svg>
<svg style="left:55px;top:805px;" width="12" height="16" viewBox="0 0 12 16"><path d="M2 5.700 6 2l4 3.700M2 10l4 3.700 4-3.700" stroke-width="1.150"/></svg>
<svg style="left:55px;top:830.7px;" width="12" height="16" viewBox="0 0 12 16"><path d="M2 2.300l4 3.800 4-3.800M2 13.800l4-4 4 4" stroke-width="1.150"/></svg>
<div class="clip" style="left:81px;top:488px;width:54px;height:416px">
<svg style="left:12px;top:9.5px;" width="16" height="16" viewBox="0 0 16 16"><circle cx="6.900" cy="6.700" r="4.800" stroke-width="1.100"/><path d="M10.400 10.200 14 13.800" stroke-width="1.100"/></svg>
<div style="left:0px;top:35px;width:54px;height:1px;background:#ebecf0;"></div>
<span class="t" style="top:42px;left:34.3px;font-size:14px;color:#000;letter-spacing:-0.288px;">HEAD (Current Branch)</span>
<svg style="left:15px;top:72px;" width="10" height="8" viewBox="0 0 10 8"><path d="M1.200 2.200 5 6l3.800-3.800"/></svg>
<span class="t" style="top:66px;left:34.3px;font-size:14px;color:#000;letter-spacing:-0.194px;">Local</span>
<svg style="left:52.2px;top:95px;" width="14" height="14" viewBox="0 0 14 14"><path d="M7 1l1.800 4 4.200.400-3.200 2.800 1 4.200L7 10.200l-3.800 2.200 1-4.200L1 5.400 5.200 5z" fill="#f5b93d" stroke="#f5b93d" stroke-width=".5"/></svg>
<svg style="left:15px;top:192px;" width="10" height="8" viewBox="0 0 10 8"><path d="M1.200 2.200 5 6l3.800-3.800"/></svg>
<span class="t" style="top:186px;left:34.3px;font-size:14px;color:#000;letter-spacing:-0.589px;">Remote</span>
<svg style="left:34px;top:216px;" width="10" height="8" viewBox="0 0 10 8"><path d="M1.200 2.200 5 6l3.800-3.800"/></svg>
<svg style="left:52.5px;top:213px;" width="14" height="14" viewBox="0 0 14 14"><path d="M1 2.500v10h12v-8H7l-1.500-2z"/></svg>
<div style="left:0px;top:406px;width:28px;height:10px;background:#dcdcdc;"></div>
</div>
<div style="left:136px;top:488px;width:638px;height:37px;background:#f7f8fa;"></div>
<div style="left:135px;top:488px;width:1px;height:416px;background:#eef0f4;"></div>
<div style="left:136px;top:525px;width:628px;height:156px;background:#edf3ff;"></div>
<div style="left:136px;top:707px;width:628px;height:197px;background:#edf3ff;"></div>
<div style="left:140px;top:603px;width:620px;height:26px;background:#d4e2ff;border-radius:4px;"></div>
<div style="left:764px;top:525px;width:10px;height:166.5px;background:#dcdcdd;"></div>
<div style="left:774px;top:488px;width:1px;height:416px;background:#ebecf0;"></div>
<div style="left:139px;top:491px;width:211px;height:29.6px;background:#fff;box-sizing:border-box;border:1px solid #c3c6d2;border-radius:4.500px;"></div>
<svg style="left:146px;top:498px;" width="18" height="16" viewBox="0 0 18 16"><circle cx="6.500" cy="7" r="5" stroke-width="1.100"/><path d="M10.200 10.700 13.500 14" stroke-width="1.100"/><path d="M13 7h4l-2 2.300z" fill="#6c707e" stroke="none"/></svg>
<span class="t" style="top:496px;left:172px;font-size:14px;color:#a0a3b1;letter-spacing:0.103px;">Text or hash</span>
<span class="t" style="top:495.5px;left:304.5px;font-size:14px;color:#6c707e;letter-spacing:0.578px;">.*</span>
<span class="t" style="top:496px;left:328px;font-size:13.5px;color:#6c707e;">Cc</span>
<span class="t" style="top:496px;left:364.5px;font-size:14px;color:#818594;letter-spacing:-0.477px;">Branch</span>
<svg style="left:413.0px;top:502.7px;" width="10" height="8" viewBox="0 0 10 8"><path d="M1.200 1.800 5 5.500l3.800-3.700" stroke="#818594" stroke-width="1.100"/></svg>
<span class="t" style="top:496px;left:434.5px;font-size:14px;color:#818594;letter-spacing:-0.266px;">User</span>
<svg style="left:470.0px;top:502.7px;" width="10" height="8" viewBox="0 0 10 8"><path d="M1.200 1.800 5 5.500l3.800-3.700" stroke="#818594" stroke-width="1.100"/></svg>
<span class="t" style="top:496px;left:491px;font-size:14px;color:#818594;letter-spacing:-0.270px;">Date</span>
<svg style="left:526.5px;top:502.7px;" width="10" height="8" viewBox="0 0 10 8"><path d="M1.200 1.800 5 5.500l3.800-3.700" stroke="#818594" stroke-width="1.100"/></svg>
<span class="t" style="top:496px;left:547px;font-size:14px;color:#818594;letter-spacing:-0.263px;">Paths</span>
<svg style="left:588.5px;top:502.7px;" width="10" height="8" viewBox="0 0 10 8"><path d="M1.200 1.800 5 5.500l3.800-3.700" stroke="#818594" stroke-width="1.100"/></svg>
<svg style="left:609px;top:500px;" width="8" height="12" viewBox="0 0 8 12"><path d="M2.700 2 6.500 6l-3.800 4" stroke="#818594" stroke-width="1.100"/></svg>
<div style="left:642px;top:498px;width:16px;height:16px;background:#dfe1e5;border-radius:50%;"></div>
<svg style="left:645px;top:501px;" width="10" height="10" viewBox="0 0 10 10"><path d="M2.600 1v8.200l6.700-4.100z" stroke-width="1.100"/></svg>
<svg style="left:668px;top:498px;" width="16" height="16" viewBox="0 0 16 16"><path d="M2.700 8A5.300 5.300 0 0 1 12.200 4.800M13.300 8A5.300 5.300 0 0 1 3.800 11.200"/><path d="M.700 6 2.700 8.300 5 6.400M11 9.600 13.300 7.700l2 2.300"/></svg>
<svg style="left:694px;top:497px;" width="16" height="17" viewBox="0 0 16 17"><circle cx="4.600" cy="12.200" r="2.400"/><circle cx="11.400" cy="12.200" r="2.400"/><path d="M4.800 9.800C5.500 6.500 8 3.500 10.500 2.500M11.200 9.800c.300-2.800-.200-5.300-.700-7.300h1.800"/></svg>
<svg style="left:719px;top:498.5px;" width="18" height="16" viewBox="0 0 18 16"><path d="M1.300 7.500C3 4 5.800 2.300 9 2.300s6 1.700 7.700 5.200c-1.700 3.500-4.500 5.200-7.700 5.200S3 11 1.300 7.500z"/><circle cx="9" cy="7.500" r="2.500"/><path d="M18.200 11.800v4h-4z" fill="#6c707e" stroke="none"/></svg>
<svg style="left:747px;top:498px;" width="16" height="16" viewBox="0 0 16 16"><circle cx="6.300" cy="6.300" r="4.600" stroke-width="1.100"/><path d="M9.700 9.700 13.500 13.500" stroke-width="1.100"/></svg>
<svg style="left:136px;top:525.500px" width="60" height="378.500" viewBox="0 0 60 378.500" class="clip"><g stroke-width="1.350" stroke-linecap="butt"><path d="M16.500 13V91" stroke="#4682b4"/><path d="M16.500 91V143L33.500 169V379" stroke="#4cb27d"/><path d="M16.500 169V379" stroke="#b08b3e"/></g><circle cx="16.500" cy="13" r="4.500" fill="#4682b4" stroke="none"/><circle cx="16.500" cy="39" r="4.500" fill="#4682b4" stroke="none"/><circle cx="16.500" cy="65" r="4.500" fill="#4682b4" stroke="none"/><circle cx="16.500" cy="91" r="4.500" fill="#4cb27d" stroke="none"/><circle cx="16.500" cy="117" r="4.500" fill="#4cb27d" stroke="none"/><circle cx="16.500" cy="143" r="4.500" fill="#4cb27d" stroke="none"/><circle cx="16.500" cy="169" r="4.500" fill="#b08b3e" stroke="none"/><circle cx="33.500" cy="195" r="4.500" fill="#4cb27d" stroke="none"/><circle cx="33.500" cy="221" r="4.500" fill="#4cb27d" stroke="none"/><circle cx="33.500" cy="247" r="4.500" fill="#4cb27d" stroke="none"/><circle cx="33.500" cy="273" r="4.500" fill="#4cb27d" stroke="none"/><circle cx="33.500" cy="299" r="4.500" fill="#4cb27d" stroke="none"/><circle cx="33.500" cy="325" r="4.500" fill="#4cb27d" stroke="none"/><circle cx="33.500" cy="351" r="4.500" fill="#4cb27d" stroke="none"/><circle cx="33.500" cy="377" r="4.500" fill="#4cb27d" stroke="none"/></svg>
<div class="clip" style="left:136px;top:525px;width:628px;height:379px">
<span class="t" style="top:2.8000000000000007px;left:43.5px;font-size:14px;color:#000;letter-spacing:-0.112px;">boot4_maven4</span>
<svg style="left:161px;top:7px;" width="12" height="12" viewBox="0 0 12 12"><path d="M6 1.300 1 6.300a.9.9 0 0 0 0 1.300l3.700 3.700" stroke="#8f5af0" stroke-width="1.100"/></svg>
<svg style="left:166px;top:7px;" width="12" height="12" viewBox="0 0 12 12"><path d="M6 1.300 1 6.300a.9.9 0 0 0 0 1.300l3.700 3.700" stroke="#3a9a50" stroke-width="1.100"/></svg>
<svg style="left:171px;top:7px;" width="12" height="12" viewBox="0 0 12 12"><path d="M10.500 1H6.400a1 1 0 0 0-.700.300L1 6a1 1 0 0 0 0 1.400L4.600 11a1 1 0 0 0 1.400 0l4.700-4.700a1 1 0 0 0 .300-.700V1.500a.500.500 0 0 0-.500-.500z" stroke="#f0a020" stroke-width="1.100"/><circle cx="8.600" cy="3.400" r=".8" fill="#f0a020" stroke="none"/></svg>
<span class="t" style="top:3.6000000000000014px;left:186.16px;font-size:13px;color:#818594;letter-spacing:-0.142px;">origin &amp; boot4patched</span>
<span class="t" style="top:2.8000000000000007px;left:317.4px;font-size:14px;color:#000;letter-spacing:-0.630px;-webkit-text-stroke:.35px #000;">JavaOPs</span>
<span class="t" style="top:2.8000000000000007px;left:464.4px;font-size:14px;color:#000;letter-spacing:0.154px;">Yesterday 22:50</span>
<span class="t" style="top:28.799999999999997px;left:43.5px;font-size:14px;color:#000;letter-spacing:-0.012px;">boot4_version</span>
<span class="t" style="top:28.799999999999997px;left:317.4px;font-size:14px;color:#000;letter-spacing:-0.630px;-webkit-text-stroke:.35px #000;">JavaOPs</span>
<span class="t" style="top:28.799999999999997px;left:464.4px;font-size:14px;color:#000;letter-spacing:0.154px;">Yesterday 22:49</span>
<span class="t" style="top:54.8px;left:43.5px;font-size:14px;color:#000;letter-spacing:-0.115px;">boot4_userCache</span>
<span class="t" style="top:54.8px;left:317.4px;font-size:14px;color:#000;letter-spacing:-0.630px;-webkit-text-stroke:.35px #000;">JavaOPs</span>
<span class="t" style="top:54.8px;left:464.4px;font-size:14px;color:#000;letter-spacing:0.154px;">Yesterday 22:48</span>
<span class="t" style="top:80.8px;left:43.5px;font-size:14px;color:#000;letter-spacing:0.213px;">Migrate to spring boot 4</span>
<svg style="left:212px;top:85px;" width="12" height="12" viewBox="0 0 12 12"><path d="M6 1.300 1 6.300a.9.9 0 0 0 0 1.300l3.700 3.700" stroke="#8f5af0" stroke-width="1.100"/></svg>
<svg style="left:217px;top:85px;" width="12" height="12" viewBox="0 0 12 12"><path d="M10.500 1H6.400a1 1 0 0 0-.700.300L1 6a1 1 0 0 0 0 1.400L4.600 11a1 1 0 0 0 1.400 0l4.700-4.700a1 1 0 0 0 .300-.700V1.500a.500.500 0 0 0-.500-.500z" stroke="#3a9a50" stroke-width="1.100"/><circle cx="8.600" cy="3.400" r=".8" fill="#3a9a50" stroke="none"/></svg>
<span class="t" style="top:81.6px;left:232.29px;font-size:13px;color:#818594;letter-spacing:-0.210px;">origin &amp; boot4</span>
<span class="t" style="top:80.8px;left:317.4px;font-size:14px;color:#000;letter-spacing:-0.630px;-webkit-text-stroke:.35px #000;">JavaOPs</span>
<span class="t" style="top:80.8px;left:464.4px;font-size:14px;color:#000;letter-spacing:0.121px;">Yesterday 22:47</span>
<span class="t" style="top:106.8px;left:43.5px;font-size:14px;color:#000;letter-spacing:-0.136px;">8_02_update_fix_refacto</span>
<svg style="left:199px;top:111px;" width="12" height="12" viewBox="0 0 12 12"><path d="M6 1.300 1 6.300a.9.9 0 0 0 0 1.300l3.700 3.700" stroke="#8f5af0" stroke-width="1.100"/></svg>
<svg style="left:204px;top:111px;" width="12" height="12" viewBox="0 0 12 12"><path d="M10.500 1H6.400a1 1 0 0 0-.700.300L1 6a1 1 0 0 0 0 1.400L4.600 11a1 1 0 0 0 1.400 0l4.700-4.700a1 1 0 0 0 .300-.700V1.500a.500.500 0 0 0-.500-.500z" stroke="#3a9a50" stroke-width="1.100"/><circle cx="8.600" cy="3.400" r=".8" fill="#3a9a50" stroke="none"/></svg>
<span class="t" style="top:107.6px;left:219.08px;font-size:13px;color:#818594;letter-spacing:-0.216px;">origin &amp; patched</span>
<span class="t" style="top:106.8px;left:317.4px;font-size:14px;color:#000;letter-spacing:-0.630px;-webkit-text-stroke:.35px #000;">JavaOPs</span>
<span class="t" style="top:106.8px;left:464.4px;font-size:14px;color:#000;letter-spacing:-0.345px;">05.11.2024 1:01</span>
<span class="t" style="top:132.8px;left:43.5px;font-size:14px;color:#000;letter-spacing:-0.443px;">8_01_migrate_spring_boot_3_1_2</span>
<span class="t" style="top:132.8px;left:317.4px;font-size:14px;color:#000;letter-spacing:-0.630px;-webkit-text-stroke:.35px #000;">JavaOPs</span>
<span class="t" style="top:132.8px;left:464.4px;font-size:14px;color:#000;letter-spacing:-0.125px;">03.09.2024 14:14</span>
<span class="t" style="top:158.8px;left:43.5px;font-size:14px;color:#000;letter-spacing:-0.393px;">Update README.md</span>
<svg style="left:222px;top:163px;" width="12" height="12" viewBox="0 0 12 12"><path d="M10.500 1H6.400a1 1 0 0 0-.700.300L1 6a1 1 0 0 0 0 1.400L4.600 11a1 1 0 0 0 1.400 0l4.700-4.700a1 1 0 0 0 .300-.700V1.500a.500.500 0 0 0-.500-.500z" stroke="#8f5af0" stroke-width="1.100"/><circle cx="8.600" cy="3.400" r=".8" fill="#8f5af0" stroke="none"/></svg>
<span class="t" style="top:159.60000000000002px;left:236.82px;font-size:13px;color:#818594;letter-spacing:-0.180px;">origin/master</span>
<span class="t" style="top:158.8px;left:317.4px;font-size:14px;color:#000;letter-spacing:-0.040px;-webkit-text-stroke:.35px #000;">Java Online Projects*</span>
<span class="t" style="top:158.8px;left:464.4px;font-size:14px;color:#000;letter-spacing:-0.169px;">17.05.2024 19:20</span>
<span class="t" style="top:184.8px;left:43.5px;font-size:14px;color:#000;letter-spacing:-0.143px;">7_03_remove_data_rest_refactoring</span>
<span class="t" style="top:184.8px;left:317.4px;font-size:14px;color:#000;letter-spacing:-0.327px;">admin@javaops.ru</span>
<span class="t" style="top:184.8px;left:464.4px;font-size:14px;color:#000;letter-spacing:-0.050px;">27.04.2022 10:59</span>
<span class="t" style="top:210.8px;left:43.5px;font-size:14px;color:#000;letter-spacing:-0.336px;">7_02_xss_validation</span>
<span class="t" style="top:210.8px;left:317.4px;font-size:14px;color:#000;letter-spacing:-0.327px;">admin@javaops.ru</span>
<span class="t" style="top:210.8px;left:464.4px;font-size:14px;color:#000;letter-spacing:-0.050px;">27.04.2022 10:59</span>
<span class="t" style="top:236.8px;left:43.5px;font-size:14px;color:#000;letter-spacing:-0.177px;">7_01_upgrade_refactoring</span>
<span class="t" style="top:236.8px;left:317.4px;font-size:14px;color:#000;letter-spacing:-0.327px;">admin@javaops.ru</span>
<span class="t" style="top:236.8px;left:464.4px;font-size:14px;color:#000;letter-spacing:-0.050px;">27.04.2022 10:58</span>
<span class="t" style="top:262.8px;left:43.5px;font-size:14px;color:#000;letter-spacing:-0.318px;">6_07_update_cache</span>
<span class="t" style="top:262.8px;left:317.4px;font-size:14px;color:#000;letter-spacing:-0.327px;">admin@javaops.ru</span>
<span class="t" style="top:262.8px;left:464.4px;font-size:14px;color:#000;letter-spacing:-0.458px;">16.04.2021 1:11</span>
<span class="t" style="top:288.8px;left:43.5px;font-size:14px;color:#000;letter-spacing:-0.424px;">6_06_add_cache</span>
<span class="t" style="top:288.8px;left:317.4px;font-size:14px;color:#000;letter-spacing:-0.327px;">admin@javaops.ru</span>
<span class="t" style="top:288.8px;left:464.4px;font-size:14px;color:#000;letter-spacing:-0.401px;">16.04.2021 1:10</span>
<span class="t" style="top:314.8px;left:43.5px;font-size:14px;color:#000;letter-spacing:-0.150px;">6_05_test_body_check</span>
<span class="t" style="top:314.8px;left:317.4px;font-size:14px;color:#000;letter-spacing:-0.327px;">admin@javaops.ru</span>
<span class="t" style="top:314.8px;left:464.4px;font-size:14px;color:#000;letter-spacing:-0.401px;">16.04.2021 1:10</span>
<span class="t" style="top:340.8px;left:43.5px;font-size:14px;color:#000;letter-spacing:-0.124px;">6_04_json_support</span>
<span class="t" style="top:340.8px;left:317.4px;font-size:14px;color:#000;letter-spacing:-0.327px;">admin@javaops.ru</span>
<span class="t" style="top:340.8px;left:464.4px;font-size:14px;color:#000;letter-spacing:-0.401px;">16.04.2021 1:10</span>
<span class="t" style="top:366.8px;left:43.5px;font-size:14px;color:#000;letter-spacing:-0.189px;">6_03_add_tests</span>
<span class="t" style="top:366.8px;left:317.4px;font-size:14px;color:#000;letter-spacing:-0.327px;">admin@javaops.ru</span>
<span class="t" style="top:366.8px;left:464.4px;font-size:14px;color:#000;letter-spacing:-0.281px;">16.04.2021 1:09</span>
</div>
<div style="left:775px;top:524px;width:484px;height:1px;background:#ebecf0;"></div>
<svg style="left:785px;top:497px;" width="18" height="18" viewBox="0 0 18 18"><g><path d="M18 5.500h-8.200M12.500 2.800 9.800 5.500l2.700 2.700"/><path d="M2.300 12.500h8.200M7.800 9.800l2.700 2.700-2.700 2.700"/></g></svg>
<svg style="left:813px;top:498px;" width="16" height="16" viewBox="0 0 16 16"><path d="M2.500 5.500h7.500a3.800 3.800 0 0 1 0 7.600H5"/><path d="M5.500 2.500l-3 3 3 3"/></svg>
<svg style="left:839px;top:498px;" width="16" height="16" viewBox="0 0 16 16"><circle cx="8" cy="8" r="6.500"/><path d="M8 4v4.300l2.200 1.500"/></svg>
<svg style="left:864px;top:498.5px;" width="18" height="16" viewBox="0 0 18 16"><path d="M1.300 7.500C3 4 5.800 2.300 9 2.300s6 1.700 7.700 5.200c-1.700 3.500-4.500 5.200-7.700 5.200S3 11 1.300 7.500z"/><circle cx="9" cy="7.500" r="2.500"/><path d="M18.200 11.800v4h-4z" fill="#6c707e" stroke="none"/></svg>
<svg style="left:1207px;top:498px;" width="12" height="16" viewBox="0 0 12 16"><path d="M2 5.700 6 2l4 3.700M2 10l4 3.700 4-3.700" stroke-width="1.150"/></svg>
<svg style="left:1233px;top:498px;" width="12" height="16" viewBox="0 0 12 16"><path d="M2 2.300l4 3.800 4-3.800M2 13.800l4-4 4 4" stroke-width="1.150"/></svg>
<div style="left:775px;top:694px;width:484px;height:120px;background:#e2f6e6;"></div>
<div style="left:787px;top:814px;width:460px;height:24px;background:#dfe0e5;border-radius:4px;"></div>
<div style="left:1249px;top:687px;width:10px;height:145px;background:rgba(110,110,115,.19);"></div>
<div style="left:775px;top:850px;width:484px;height:1px;background:#ebecf0;"></div>
<div style="left:1249px;top:851.5px;width:10px;height:27px;background:rgba(110,110,115,.19);"></div>
<svg style="left:866px;top:534.7px;" width="10" height="8" viewBox="0 0 10 8"><path d="M1 2 5 5.800l4-3.800"/></svg>
<svg style="left:885px;top:530.7px;" width="15" height="13" viewBox="0 0 15 13"><path d="M.500 2.500a1 1 0 0 1 1-1h3.300a1 1 0 0 1 .800.400l1 1.300a1 1 0 0 0 .800.400h5.100a1 1 0 0 1 1 1v6.900a1 1 0 0 1-1 1h-11a1 1 0 0 1-1-1z" fill="#ebecf0"/></svg>
<span class="t" style="top:527.9px;left:903.5px;font-size:14px;color:#000;letter-spacing:0.041px;">user</span>
<span class="t" style="top:527.9px;left:937.3px;font-size:14px;color:#818594;letter-spacing:0.060px;">2 files</span>
<svg style="left:885px;top:558.7px;" width="10" height="8" viewBox="0 0 10 8"><path d="M1 2 5 5.800l4-3.800"/></svg>
<svg style="left:904px;top:554.7px;" width="15" height="13" viewBox="0 0 15 13"><path d="M.500 2.500a1 1 0 0 1 1-1h3.300a1 1 0 0 1 .800.400l1 1.300a1 1 0 0 0 .800.400h5.100a1 1 0 0 1 1 1v6.900a1 1 0 0 1-1 1h-11a1 1 0 0 1-1-1z" fill="#ebecf0"/></svg>
<span class="t" style="top:551.9px;left:922.5px;font-size:14px;color:#000;letter-spacing:-0.108px;">model</span>
<span class="t" style="top:551.9px;left:966.4px;font-size:14px;color:#818594;letter-spacing:-0.313px;">1 file</span>
<svg style="left:921.4px;top:578px;" width="16" height="16" viewBox="0 0 16 16"><circle cx="8" cy="8" r="6.500" stroke="#3574f0" fill="#edf3ff" stroke-linecap="butt"/><path d="M10.300 9.800a2.900 2.900 0 1 1 0-3.600" stroke="#3574f0" stroke-width="1.1"/></svg>
<span class="t" style="top:575.9px;left:941.5px;font-size:14px;color:#2346c8;letter-spacing:-0.040px;">User.java</span>
<svg style="left:885px;top:606.7px;" width="10" height="8" viewBox="0 0 10 8"><path d="M1 2 5 5.800l4-3.800"/></svg>
<svg style="left:904px;top:602.7px;" width="15" height="13" viewBox="0 0 15 13"><path d="M.500 2.500a1 1 0 0 1 1-1h3.300a1 1 0 0 1 .800.400l1 1.300a1 1 0 0 0 .800.400h5.100a1 1 0 0 1 1 1v6.900a1 1 0 0 1-1 1h-11a1 1 0 0 1-1-1z" fill="#ebecf0"/></svg>
<span class="t" style="top:599.9px;left:922.5px;font-size:14px;color:#000;letter-spacing:0.271px;">web</span>
<span class="t" style="top:599.9px;left:955.6px;font-size:14px;color:#818594;letter-spacing:-0.313px;">1 file</span>
<svg style="left:921.4px;top:626px;" width="16" height="16" viewBox="0 0 16 16"><circle cx="8" cy="8" r="6.500" stroke="#3574f0" fill="#edf3ff" stroke-linecap="butt"/><path d="M10.300 9.800a2.900 2.900 0 1 1 0-3.600" stroke="#3574f0" stroke-width="1.1"/></svg>
<span class="t" style="top:623.9px;left:941.5px;font-size:14px;color:#2346c8;letter-spacing:-0.044px;">UniqueMailValidator.java</span>
<svg style="left:846.5px;top:654.7px;" width="10" height="8" viewBox="0 0 10 8"><path d="M1 2 5 5.800l4-3.800"/></svg>
<svg style="left:865.5px;top:650.7px;" width="15" height="13" viewBox="0 0 15 13"><path d="M.500 2.500a1 1 0 0 1 1-1h3.300a1 1 0 0 1 .800.400l1 1.300a1 1 0 0 0 .800.400h5.100a1 1 0 0 1 1 1v6.900a1 1 0 0 1-1 1h-11a1 1 0 0 1-1-1z" fill="#ebecf0"/></svg>
<span class="t" style="top:647.9px;left:884.0px;font-size:14px;color:#000;letter-spacing:0.059px;">resources</span>
<span class="t" style="top:647.9px;left:953.4px;font-size:14px;color:#818594;letter-spacing:-0.313px;">1 file</span>
<svg style="left:884.0px;top:673.5px;" width="22" height="22" viewBox="0 0 22 22"><g transform="scale(.76)"><g stroke="#419c50" stroke-width="1.600" stroke-linejoin="round"><path d="M18.300 11C17.800 8 17.200 5.500 16.600 3.600 15.500 6.500 13 7.800 9 8.200 4.500 8.500 1.500 10.500 1.500 14c0 2.500 1.500 4.300 3.300 5.500h6"/><path d="M4.800 19.200c2.200-.6 3.700-1.400 5-2.700"/></g><circle cx="15.600" cy="17" r="5.300" fill="#f7f8fa" stroke="none"/><circle cx="15.600" cy="17" r="3.700" stroke="#6c707e" stroke-width="1.300"/><path d="M15.600 11v5" stroke="#f7f8fa" stroke-width="3.400" stroke-linecap="butt"/><path d="M15.600 11.800v4" stroke="#6c707e" stroke-width="1.300"/></g></svg>
<span class="t" style="top:671.9px;left:903.5px;font-size:14px;color:#2346c8;letter-spacing:-0.149px;">application.yaml</span>
<svg style="left:827.7px;top:702.7px;" width="10" height="8" viewBox="0 0 10 8"><path d="M1 2 5 5.800l4-3.800"/></svg>
<svg style="left:846.7px;top:698.7px;" width="15" height="13" viewBox="0 0 15 13"><path d="M.500 2.500a1 1 0 0 1 1-1h3.300a1 1 0 0 1 .800.400l1 1.300a1 1 0 0 0 .800.400h5.100a1 1 0 0 1 1 1v6.900a1 1 0 0 1-1 1h-11a1 1 0 0 1-1-1z" fill="#ebecf0"/></svg>
<span class="t" style="top:695.9px;left:865.2px;font-size:14px;color:#000;letter-spacing:0.143px;">test\java\ru\javaops\bootjava</span>
<span class="t" style="top:695.9px;left:1053.6px;font-size:14px;color:#818594;letter-spacing:0.017px;">3 files</span>
<svg style="left:846.5px;top:726.7px;" width="10" height="8" viewBox="0 0 10 8"><path d="M1 2 5 5.800l4-3.800"/></svg>
<svg style="left:865.5px;top:722.7px;" width="15" height="13" viewBox="0 0 15 13"><path d="M.500 2.500a1 1 0 0 1 1-1h3.300a1 1 0 0 1 .800.400l1 1.300a1 1 0 0 0 .800.400h5.100a1 1 0 0 1 1 1v6.900a1 1 0 0 1-1 1h-11a1 1 0 0 1-1-1z" fill="#ebecf0"/></svg>
<span class="t" style="top:719.9px;left:884.0px;font-size:14px;color:#000;letter-spacing:0.298px;">user\web</span>
<span class="t" style="top:719.9px;left:950.5px;font-size:14px;color:#818594;letter-spacing:0.017px;">2 files</span>
<svg style="left:884.5px;top:746px;" width="16" height="16" viewBox="0 0 16 16"><circle cx="7.500" cy="8.300" r="6.400" stroke="#3574f0" fill="#edf3ff"/><path d="M9.800 10.200a2.900 2.900 0 1 1 0-3.700" stroke="#3574f0" stroke-width="1.100"/><path d="M7 3.800 11 .800v6zM15.700 3.800 11.700 .800v6z" fill="#e2f6e6" stroke="#e2f6e6" stroke-width="1.600"/><path d="M7 3.800 11 .800v6z" fill="#e25562" stroke="none"/><path d="M15.700 3.800 11.700 .800v6z" fill="#4fa463" stroke="none"/></svg>
<span class="t" style="top:743.9px;left:903.5px;font-size:14px;color:#2346c8;letter-spacing:0.036px;">AdminUserControllerTest.java</span>
<svg style="left:884.5px;top:770px;" width="16" height="16" viewBox="0 0 16 16"><circle cx="7.500" cy="8.300" r="6.400" stroke="#3574f0" fill="#edf3ff"/><path d="M9.800 10.200a2.900 2.900 0 1 1 0-3.700" stroke="#3574f0" stroke-width="1.100"/><path d="M7 3.800 11 .800v6zM15.700 3.800 11.700 .800v6z" fill="#e2f6e6" stroke="#e2f6e6" stroke-width="1.600"/><path d="M7 3.800 11 .800v6z" fill="#e25562" stroke="none"/><path d="M15.700 3.800 11.700 .800v6z" fill="#4fa463" stroke="none"/></svg>
<span class="t" style="top:767.9px;left:903.5px;font-size:14px;color:#2346c8;letter-spacing:0.064px;">ProfileControllerTest.java</span>
<svg style="left:865.1px;top:794px;" width="16" height="16" viewBox="0 0 16 16"><circle cx="8" cy="8" r="6.500" stroke="#3574f0" fill="#edf3ff" stroke-dasharray="3.400 1.705" stroke-dashoffset="1.700" stroke-linecap="butt"/><path d="M10.300 9.800a2.900 2.900 0 1 1 0-3.600" stroke="#3574f0" stroke-width="1.1"/></svg>
<span class="t" style="top:791.9px;left:884.1px;font-size:14px;color:#2346c8;letter-spacing:0.115px;">AbstractControllerTest.java</span>
<span class="t" style="top:815px;left:827.5px;font-size:19px;color:#3574f0;font-style:italic;-webkit-text-stroke:.3px #3574f0;">m</span>
<span class="t" style="top:815.9px;left:846.3px;font-size:14px;color:#2346c8;letter-spacing:-0.215px;">pom.xml</span>
<div class="clip" style="left:775px;top:838px;width:474px;height:12px">
<span class="t" style="top:2.5px;left:52.5px;font-size:10px;color:#3574f0;font-weight:700;">M</span>
<svg style="left:61.5px;top:6px;" width="6" height="10" viewBox="0 0 6 10"><path d="M3 1v7M.500 5.500 3 8.500l2.500-3" stroke="#3574f0"/></svg>
<span class="t" style="top:2.5px;left:71.3px;font-size:14px;color:#2346c8;letter-spacing:-0.804px;">README.md</span>
</div>
<span class="t m" style="top:865.5px;left:789.4px;font-size:15px;color:#000;font-weight:700;letter-spacing:-0.073px;">Migrate to spring boot 4</span>
<div style="left:15px;top:915px;width:8px;height:8px;background:#e7effd;box-sizing:border-box;border:1px solid #3574f0;border-radius:2px;"></div>
<span class="t" style="top:908.5px;left:27px;font-size:14px;color:#6c707e;letter-spacing:0.008px;">bootjava</span>
<svg style="left:1072px;top:911px;" width="12" height="14" viewBox="0 0 12 14"><g stroke-width="1"><circle cx="3" cy="3" r="1.700"/><circle cx="9" cy="4.500" r="1.700"/><path d="M3 4.700v8.300M9 6.200c0 2.500-2 3-6 3"/></g></svg>
<span class="t" style="top:908.5px;left:1090px;font-size:14px;color:#6c707e;letter-spacing:0.178px;">boot4patched</span>
<div style="left:1185px;top:905px;width:38px;height:28px;background:#cdd9f2;"></div>
<div style="left:1223px;top:905px;width:13px;height:28px;background:#dfe0e3;"></div>
<span class="t" style="top:908.5px;left:1193px;font-size:14px;color:#6c707e;letter-spacing:0.198px;">836 of 2300M</span>
<svg style="left:11.0px;top:51.0px;" width="20" height="20" viewBox="0 0 20 20"><g stroke="#6c707e" stroke-width="1.300"><path d="M2 4.500a1.500 1.500 0 0 1 1.500-1.500h4a1.500 1.500 0 0 1 1.200.600l1 1.300a1.500 1.500 0 0 0 1.200.600h5.600a1.500 1.500 0 0 1 1.500 1.500v8a1.500 1.500 0 0 1-1.500 1.500h-13a1.500 1.500 0 0 1-1.500-1.500z"/></g></svg>
<svg style="left:11.0px;top:91.0px;" width="20" height="20" viewBox="0 0 20 20"><g stroke="#6c707e" stroke-width="1.300"><circle cx="4.200" cy="4.700" r="2.500"/><circle cx="4.200" cy="15.500" r="2.500"/><circle cx="15.500" cy="15.500" r="2.500"/><path d="M4.200 7.200v5.800M15.500 13V9a3.500 3.500 0 0 0-3.500-3.500h-2.300M12.200 2.300 9.300 5.500l2.900 3.200"/></g></svg>
<div style="left:9px;top:126px;width:24px;height:1px;background:#cfd1d8;"></div>
<svg style="left:11.0px;top:142.0px;" width="20" height="20" viewBox="0 0 20 20"><g stroke="#6c707e" stroke-width="1.300"><rect x="7" y="2.300" width="11" height="6.200" rx="1.500"/><rect x="7" y="11.800" width="11" height="6.200" rx="1.500"/><path d="M3 1.500v13.400h4M3 5.400h4"/></g></svg>
<div style="left:12.9px;top:190.6px;width:2.8px;height:2.8px;background:#6c707e;border-radius:50%;"></div>
<div style="left:19.6px;top:190.6px;width:2.8px;height:2.8px;background:#6c707e;border-radius:50%;"></div>
<div style="left:26.200000000000003px;top:190.6px;width:2.8px;height:2.8px;background:#6c707e;border-radius:50%;"></div>
<svg style="left:11.0px;top:674.0px;" width="20" height="20" viewBox="0 0 20 20"><g stroke="#6c707e" stroke-width="1.300"><path d="M2.500 3h8.500c3.500 0 6 1.500 7 4.500h-15.500zM7.500 7.500v10.500h4.300v-10.500"/></g></svg>
<svg style="left:11.0px;top:714.0px;" width="20" height="20" viewBox="0 0 20 20"><g stroke="#6c707e" stroke-width="1.300"><circle cx="10" cy="10" r="3"/><path d="M1.500 10h5.500M13 10h5.500"/></g></svg>
<svg style="left:11.0px;top:754.0px;" width="20" height="20" viewBox="0 0 20 20"><g stroke="#6c707e" stroke-width="1.300"><path d="M7 1.500h6l5.500 8.500-5.500 8.500h-6l-5.500-8.500z"/><path d="M8 6.500v7l5.500-3.500z"/></g></svg>
<svg style="left:11.0px;top:793.7px;" width="20" height="20" viewBox="0 0 20 20"><g stroke="#6c707e" stroke-width="1.300"><rect x="1.500" y="2.500" width="17" height="15" rx="2"/><path d="M5 7l3 2.500-3 2.500M10 13h5"/></g></svg>
<svg style="left:11.0px;top:833.7px;" width="20" height="20" viewBox="0 0 20 20"><g stroke="#6c707e" stroke-width="1.300"><circle cx="10" cy="10" r="8.300"/><path d="M10 5.500v6" stroke-width="1.600"/><circle cx="10" cy="14.200" r=".6" fill="#6c707e"/></g></svg>
<div style="left:6px;top:869px;width:30px;height:30px;background:#3574f0;border-radius:7px;"></div>
<svg style="left:11px;top:874px;" width="20" height="20" viewBox="0 0 20 20"><g stroke="#fff" stroke-width="1.400"><circle cx="5.500" cy="5" r="2.300"/><circle cx="14" cy="7" r="2.300"/><path d="M5.500 7.300V18M14 9.300c0 3.500-3 4.200-8.500 4.200"/></g></svg>
<svg style="left:1270.0px;top:51.0px;" width="20" height="20" viewBox="0 0 20 20"><g stroke="#6c707e" stroke-width="1.300"><path d="M2.500 15c1.600-1.600 2.200-3.300 2.200-6.800a5.300 5.300 0 0 1 10.600 0c0 3.500.600 5.200 2.200 6.800zM8.300 18h3.400"/></g></svg>
<div style="left:1283px;top:51px;width:7px;height:7px;background:#3574f0;border-radius:50%;"></div>
<svg style="left:1270.0px;top:91.0px;" width="20" height="20" viewBox="0 0 20 20"><g stroke="#6c707e" stroke-width="1.300"><path d="M4 13.500c-1.600-1.100-2.500-2.700-2.500-4.500 0-3.600 3.400-6.500 8-6.500 4 0 7.200 2.100 7.900 5M6.500 12c-.800-.700-1.300-1.600-1.300-2.700 0-2.100 2-3.800 4.800-3.800 1.300 0 2.400.300 3.200.900"/><path d="M9 10.500h9.500v6.500h-1.500v2.500l-3-2.500h-5z"/></g></svg>
<svg style="left:1270.0px;top:131.0px;" width="20" height="20" viewBox="0 0 20 20"><g stroke="#6c707e" stroke-width="1.300"><ellipse cx="10" cy="4.500" rx="7.500" ry="3"/><path d="M2.500 4.500v11c0 1.700 3.300 3 7.500 3s7.500-1.300 7.500-3v-11M2.500 8.200c0 1.700 3.300 3 7.500 3s7.500-1.300 7.500-3M2.500 11.900c0 1.700 3.300 3 7.500 3s7.500-1.300 7.500-3"/></g></svg>
<span class="t" style="top:169.5px;left:1270.5px;font-size:24px;color:#6c707e;font-style:italic;">m</span>
<svg style="left:1270.0px;top:211.0px;" width="20" height="20" viewBox="0 0 20 20"><g stroke="#6c707e" stroke-width="1.300"><path d="M4.500 5a8 8 0 1 1 0 10"/><circle cx="10.300" cy="10" r="3"/><path d="M1.500 10h5.800"/></g></svg>
</body></html>
